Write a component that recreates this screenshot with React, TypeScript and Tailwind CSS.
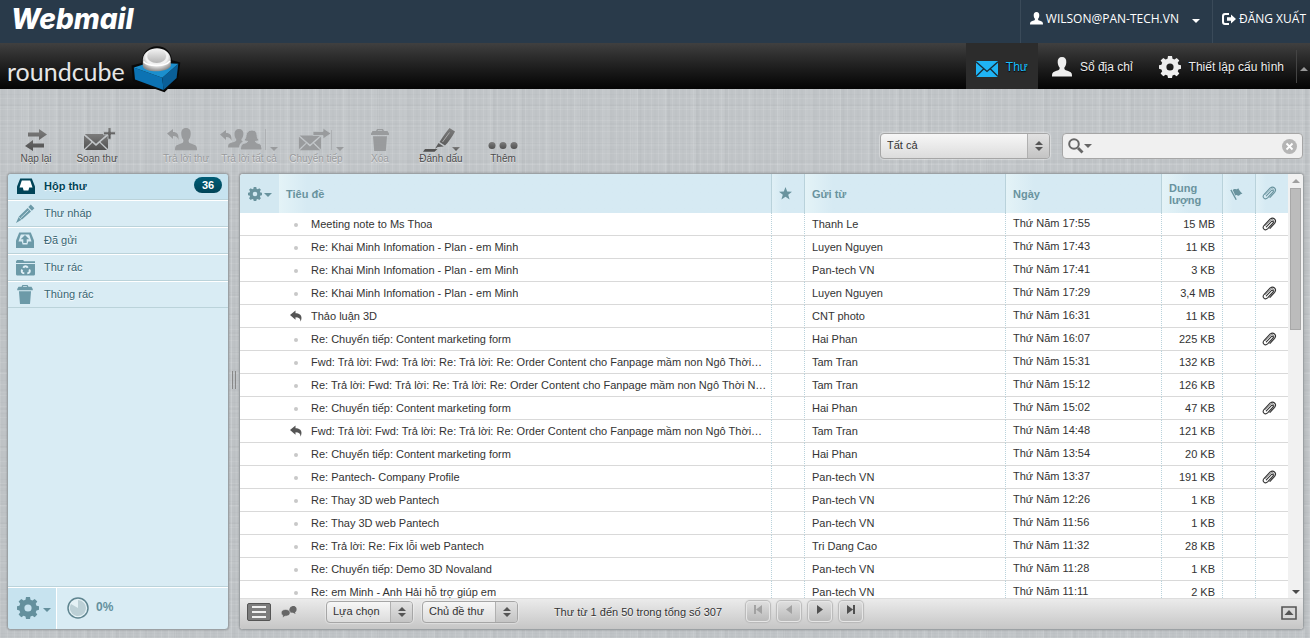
import type { ReactNode } from 'react';

type Message = {
  subject: string;
  from: string;
  date: string;
  size: string;
  replied?: boolean;
  attachment?: boolean;
};

const messages: Message[] = [
  { subject: 'Meeting note to Ms Thoa', from: 'Thanh Le', date: 'Thứ Năm 17:55', size: '15 MB', attachment: true },
  { subject: 'Re: Khai Minh Infomation - Plan - em Minh', from: 'Luyen Nguyen', date: 'Thứ Năm 17:43', size: '11 KB' },
  { subject: 'Re: Khai Minh Infomation - Plan - em Minh', from: 'Pan-tech VN', date: 'Thứ Năm 17:41', size: '3 KB' },
  { subject: 'Re: Khai Minh Infomation - Plan - em Minh', from: 'Luyen Nguyen', date: 'Thứ Năm 17:29', size: '3,4 MB', attachment: true },
  { subject: 'Thảo luận 3D', from: 'CNT photo', date: 'Thứ Năm 16:31', size: '11 KB', replied: true },
  { subject: 'Re: Chuyển tiếp: Content marketing form', from: 'Hai Phan', date: 'Thứ Năm 16:07', size: '225 KB', attachment: true },
  { subject: 'Fwd: Trả lời: Fwd: Trả lời: Re: Trả lời: Re: Order Content cho Fanpage mầm non Ngô Thời…', from: 'Tam Tran', date: 'Thứ Năm 15:31', size: '132 KB' },
  { subject: 'Re: Trả lời: Fwd: Trả lời: Re: Trả lời: Re: Order Content cho Fanpage mầm non Ngô Thời N…', from: 'Tam Tran', date: 'Thứ Năm 15:12', size: '126 KB' },
  { subject: 'Re: Chuyển tiếp: Content marketing form', from: 'Hai Phan', date: 'Thứ Năm 15:02', size: '47 KB', attachment: true },
  { subject: 'Fwd: Trả lời: Fwd: Trả lời: Re: Trả lời: Re: Order Content cho Fanpage mầm non Ngô Thời…', from: 'Tam Tran', date: 'Thứ Năm 14:48', size: '121 KB', replied: true },
  { subject: 'Re: Chuyển tiếp: Content marketing form', from: 'Hai Phan', date: 'Thứ Năm 13:54', size: '20 KB' },
  { subject: 'Re: Pantech- Company Profile', from: 'Pan-tech VN', date: 'Thứ Năm 13:37', size: '191 KB', attachment: true },
  { subject: 'Re: Thay 3D web Pantech', from: 'Pan-tech VN', date: 'Thứ Năm 12:26', size: '1 KB' },
  { subject: 'Re: Thay 3D web Pantech', from: 'Pan-tech VN', date: 'Thứ Năm 11:56', size: '1 KB' },
  { subject: 'Re: Trả lời: Re: Fix lỗi web Pantech', from: 'Tri Dang Cao', date: 'Thứ Năm 11:32', size: '28 KB' },
  { subject: 'Re: Chuyển tiếp: Demo 3D Novaland', from: 'Pan-tech VN', date: 'Thứ Năm 11:28', size: '1 KB' },
  { subject: 'Re: em Minh - Anh Hải hỗ trợ giúp em', from: 'Pan-tech VN', date: 'Thứ Năm 11:11', size: '2 KB' },
];

/* ---------- icons ---------- */

function Gear({ size, className }: { size: number; className?: string }) {
  return (
    <svg width={size} height={size} viewBox="0 0 22 22" className={className} fill="currentColor" aria-hidden="true">
      <path
        fillRule="evenodd"
        d="M9 0h4l.5 2.7 1.9.8 2.3-1.6 2.6 2.6-1.6 2.3.8 1.9 2.5.5v3.6l-2.5.6-.8 1.9 1.6 2.3-2.6 2.7-2.3-1.6-1.9.8L13 22H9l-.5-2.5-1.9-.8-2.3 1.6-2.7-2.7 1.6-2.3-.8-1.900L0 12.8V9.200l2.4-.5.8-1.9-1.6-2.3 2.7-2.6 2.3 1.6 1.9-.8zM11 7.4a3.6 3.6 0 1 0 0 7.2 3.6 3.6 0 0 0 0-7.2z"
      />
    </svg>
  );
}

function Person({ size, className }: { size: number; className?: string }) {
  return (
    <svg width={size} height={size} viewBox="0 0 20 20" className={className} fill="currentColor" aria-hidden="true">
      <path d="M10 0c3 0 4.500 2 4.300 5.200-.1 2.300-.8 4-1.900 5.200-.2 1.300.2 2.300 1.400 2.800 2 .8 5.200 1.300 5.900 3.300.3 1 .3 2 .3 2.900H0c0-.9 0-1.900.3-2.900.7-2 3.900-2.500 5.900-3.300 1.200-.5 1.600-1.500 1.400-2.800C6.500 9.200 5.800 7.500 5.700 5.200 5.500 2 7 0 10 0z" />
    </svg>
  );
}

function Caret({ className }: { className?: string }) {
  return (
    <svg width="8" height="4" viewBox="0 0 8 4" className={className} fill="currentColor" aria-hidden="true">
      <path d="M0 0h8L4 4z" />
    </svg>
  );
}

function Clip({ className }: { className?: string }) {
  return (
    <svg width="15" height="14" viewBox="0 0 15 14" className={className} fill="none" stroke="currentColor" strokeWidth="1.100" strokeLinecap="round" aria-hidden="true">
      <path d="M4.300 9.800 9.300 4.700c1.300-1.200 2.700.2 1.600 1.500L5.600 11.900c-2.700 2.300-5.900-.7-3.600-3.400l6-6.300c3.200-2.900 7.300.9 4.600 4.200L8 11.400" />
      <path d="M3.300 8.500 8.600 3.200c2-1.600 4.300.2 3.200 2.500" strokeWidth=".6" />
    </svg>
  );
}

function ReloadIcon() {
  return (
    <svg width="24" height="26" viewBox="0 0 24 26" fill="url(#tool)" aria-hidden="true">
      <path d="M4 5.500h11V2l8 5.500-8 5.500V9.500H4zM20 16.500H9V13l-8 6 8 5v-3.500h11z" />
    </svg>
  );
}

function EnvelopeShape() {
  return (
    <path d="M1 8.500 8.500 15 1 22zM25 8.500 17.500 15 25 22zM1.800 7H24.200L13 16.800zM2 23l7.400-7.200L13 19l3.600-3.200L24 23z" />
  );
}

function ComposeIcon() {
  return (
    <svg width="34" height="26" viewBox="0 0 34 26" fill="url(#tool)" aria-hidden="true">
      <EnvelopeShape />
      <path d="M25 .5h3v4.300h4.500v3H28v4.400h-3V7.800h-4.500v-3H25z" stroke="#c2c6c9" strokeWidth=".8" />
    </svg>
  );
}

function ReplyIcon() {
  return (
    <svg width="30" height="26" viewBox="0 0 30 26" fill="currentColor" aria-hidden="true">
      <path d="M0 6.500 6 2v3c4 0 6 2 5.500 8-.8-2.800-2.300-4-5.500-4v3z" />
      <g transform="translate(8 1) scale(1.100 1.150)">
        <path d="M10 0c3 0 4.500 2 4.300 5.200-.1 2.300-.8 4-1.900 5.200-.2 1.300.2 2.300 1.400 2.800 2 .8 5.200 1.300 5.900 3.300.3 1 .3 2 .3 2.900H0c0-.9 0-1.900.3-2.900.7-2 3.900-2.500 5.900-3.300 1.200-.5 1.600-1.500 1.400-2.800C6.500 9.200 5.800 7.500 5.700 5.200 5.500 2 7 0 10 0z" />
      </g>
    </svg>
  );
}

function ReplyAllIcon() {
  return (
    <svg width="60" height="26" viewBox="0 0 60 26" fill="currentColor" aria-hidden="true">
      <path d="M1 7.500 7 3v3c4 0 6 2 5.500 8-.8-2.800-2.300-4-5.500-4v3z" />
      <path d="M20 2c3 0 4.600 2 4.400 5-.1 2.300-.9 4-2 5.200 0 1.300.3 2 1.600 2.600-2.500 1-3.500 2.200-4 5.700H9c0-3 .6-4 3-4.800 3-.9 5.500-1 5.300-3.300-1.200-1.400-1.700-3-1.800-5.400C15.400 4 17 2 20 2z" />
      <path d="M33 3c3.600 0 5 2.500 5.100 5.500.1 2.500.9 3.500 1.900 4.500-1 1-2 1.300-3.500 1.300 0 1.200 1.200 1.500 2.500 1.900 3 .9 3.900 2 4 6.800H21.500c0-4.800 1-5.900 4-6.800 1.400-.4 3-.8 3-1.900-1.500 0-2.500-.3-3.500-1.300 1-1 1.900-2 2-4.500C27.100 5.500 29.500 3 33 3z" stroke="#c2c6c9" />
      <path d="M46 2h1v21h-1z" opacity=".5" />
      <path d="M51 20h8l-4 4z" />
    </svg>
  );
}

function ForwardIcon() {
  return (
    <svg width="46" height="26" viewBox="0 0 46 26" fill="currentColor" aria-hidden="true">
      <g transform="translate(0 2) scale(.92)">
        <EnvelopeShape />
      </g>
      <path d="M15 4.500h10V1l8 5.500-8 5.500V8.500H15z" stroke="#c2c6c9" strokeWidth=".8" />
      <path d="M33 3h1v20h-1z" opacity=".5" />
      <path d="M38 20h8l-4 4z" />
    </svg>
  );
}

function TrashIcon({ className }: { className?: string }) {
  return (
    <svg width="18" height="22" viewBox="0 0 18 22" className={className} fill="currentColor" aria-hidden="true">
      <path d="M6 0h6l1 2h3.500L18 4.500V6H0V4.500L1.500 2H5zM7 1.200 6.600 2h4.800L11 1.200zM2 7.300h14L14.800 22H3.200z" />
    </svg>
  );
}

function MarkIcon() {
  return (
    <svg width="38" height="26" viewBox="0 0 38 26" fill="url(#tool)" aria-hidden="true">
      <path d="M27.500 1 33 4.500c-3 5.500-6 10-10 14l-5.500-3.500C20.500 10.500 23.500 5.500 27.500 1zM16.500 16l5.300 3.500-6 .6-2.800 1.700zM3 22h12.500l-3 2.800H1z" />
      <path d="m20.500 15 7-9.500" stroke="#aaa" strokeWidth="1" />
      <path d="M30 20h8l-4 4z" />
    </svg>
  );
}

function MoreIcon() {
  return (
    <svg width="30" height="26" viewBox="0 0 30 26" fill="url(#tool)" aria-hidden="true">
      <circle cx="4" cy="18.500" r="3.500" />
      <circle cx="15" cy="18.500" r="3.500" />
      <circle cx="26" cy="18.500" r="3.500" />
    </svg>
  );
}

function InboxIcon() {
  return (
    <svg width="18" height="17" viewBox="0 0 18 17" fill="currentColor" aria-hidden="true">
      <path d="M3.200.5h11.600L18 8.500V16H0V8.500z" />
      <path d="M4.800 2.500h8.400l2.300 7h-3.300l-.8 3H6.600l-.8-3H2.500z" fill="#fff" />
    </svg>
  );
}

function SentIcon() {
  return (
    <svg width="18" height="17" viewBox="0 0 18 17" fill="currentColor" aria-hidden="true">
      <path d="M3.200.5h11.600L18 8.500V16H0V8.500z" />
      <path d="M4.800 2.500h8.400l2.300 7h-3.300l-.8 3H6.600l-.8-3H2.500z" fill="#d9ecf4" />
      <path d="m9 3 4.300 4.300h-2.600V11H7.300V7.300H4.700z" />
    </svg>
  );
}

function PencilIcon() {
  return (
    <svg width="19" height="19" viewBox="0 0 19 19" fill="currentColor" aria-hidden="true">
      <path d="m14.800.6 3.600 3.600-2.500 2.500-3.600-3.600zM11.600 4 15 7.400 6 15.600 0 19l2.900-6.400z" />
      <path d="M5 13.700 12.500 6.500M2.700 13l3 2.800" stroke="#d9ecf4" strokeWidth=".8" />
    </svg>
  );
}

function JunkIcon() {
  return (
    <svg width="19" height="17" viewBox="0 0 19 17" fill="currentColor" aria-hidden="true">
      <path d="M0 2.500 1 1h6l1.200 1.300H19V4H0zM0 5h19v10.500l-.8 1H.8l-.8-1z" />
      <g stroke="#e3f2f8" strokeWidth="2" fill="none">
        <path d="M7.300 8.700c1-2 3.400-2 4.400 0" />
        <path d="M13.200 10.500c1.400 1.800.3 3.700-1.900 3.700" />
        <path d="M8.300 14.200c-2.400 0-3.300-1.700-2-3.600" />
      </g>
    </svg>
  );
}

function CubeLogo() {
  return (
    <svg width="50" height="48" viewBox="0 0 50 48" aria-hidden="true">
      <defs>
        <radialGradient id="ball" cx=".5" cy=".35" r=".65">
          <stop offset="0" stopColor="#d8d8d8" />
          <stop offset=".6" stopColor="#f4f4f4" />
          <stop offset="1" stopColor="#8c8c8c" />
        </radialGradient>
        <linearGradient id="dimple" x1="0" y1="0" x2="0" y2="1">
          <stop offset="0" stopColor="#f2f2f2" />
          <stop offset="1" stopColor="#b4b4b4" />
        </linearGradient>
      </defs>
      <path d="M.5 19.500 10.500 17C11 7 17 .3 26 .3S40 6 41 14.200l8.300 2.300L47 33 33.500 46.300 2 35z" fill="#0a0a0a" />
      <path d="m2.800 21.500 28.500 10.300L32.500 44 4 33.600z" fill="#0c73b4" />
      <path d="m31.300 31.800 16-14-1.700 14.300L32.500 44z" fill="#0a5f98" />
      <path d="m2.800 21.500 16-5 28.500 1.300-16 14z" fill="#1b8fce" />
      <path d="M11.800 20.500V13c2-14.500 26.500-14.500 28 0v7c-3 6.500-24.500 7.500-28 .5z" fill="url(#ball)" />
      <ellipse cx="25.700" cy="10" rx="9.500" ry="7" fill="url(#dimple)" />
      <path d="M12.500 15.500c4.500 5.500 22 5.500 26.500-.5" stroke="#fff" strokeWidth="1.400" fill="none" />
    </svg>
  );
}

/* ---------- controls ---------- */

function Select({ label, value, className }: { label: string; value: string; className: string }) {
  return (
    <div
      className={`relative overflow-hidden rounded border border-[#a6a6a6] bg-linear-to-b from-[#f7f7f7] to-[#dcdcdc] shadow-[0_0_1px_1px_rgba(255,255,255,0.35)] ${className}`}
    >
      <select
        aria-label={label}
        defaultValue={value}
        className="block h-full w-full appearance-none bg-transparent pr-6 pb-px pl-1.5 text-[11px] text-[#333] outline-none"
      >
        <option>{value}</option>
      </select>
      <span className="pointer-events-none absolute inset-y-0 right-0 flex w-[22px] items-center justify-center border-l border-[#b0b0b0] bg-linear-to-b from-[#e2e2e2] to-[#c4c4c4] text-[#555]">
        <svg width="8" height="10" viewBox="0 0 8 10" fill="currentColor" aria-hidden="true">
          <path d="M0 4h8L4 0zM0 6h8l-4 4z" />
        </svg>
      </span>
    </div>
  );
}

function Tool({ icon, label, className, disabled }: { icon: ReactNode; label: string; className: string; disabled?: boolean }) {
  return (
    <button
      type="button"
      disabled={disabled}
      className={`flex flex-col items-center whitespace-nowrap text-[10px] leading-3 [text-shadow:0_1px_1px_rgba(255,255,255,0.7)] ${disabled ? 'text-[#999b9d]' : 'text-[#4d4d4d]'} ${className}`}
    >
      {icon}
      {label}
    </button>
  );
}

const folders = [
  { name: 'Thư nháp', icon: <PencilIcon /> },
  { name: 'Đã gửi', icon: <SentIcon /> },
  { name: 'Thư rác', icon: <JunkIcon /> },
  { name: 'Thùng rác', icon: <TrashIcon className="h-[19px] w-4" /> },
];

const pagers = [
  { label: 'Trang đầu', d: 'M1 0h2v9H1zM9 0v9L3 4.500z', off: true },
  { label: 'Trang trước', d: 'M8 0v9L2 4.500z', off: true },
  { label: 'Trang sau', d: 'M2 0v9l6-4.500z', off: false },
  { label: 'Trang cuối', d: 'M1 0v9l6-4.500zM7 0h2v9H7z', off: false },
];

const headBase = 'border-l border-[#b9d2db] p-0 text-left align-middle font-bold';
const headCell = `${headBase} bg-linear-to-r from-[#e4f3f7] to-[#d6eaf3] to-[28px] px-[7px]`;
const iconCell = `${headBase} bg-linear-to-r from-[#e0f0f6] to-[#d6eaf3] to-[10px]`;
const cell = 'h-[23px] border-b border-[#d9d9d9] p-0';
const dotted = 'border-l border-l-[#b9d2db] [border-left-style:dotted]';

export default function App() {
  return (
    <div className="flex h-screen flex-col overflow-hidden bg-[#c1c5c8] bg-[repeating-linear-gradient(90deg,rgba(255,255,255,0.09)_0_1px,transparent_1px_3px,rgba(0,0,0,0.012)_3px_5px,transparent_5px_7px),repeating-linear-gradient(0deg,rgba(255,255,255,0.08)_0_1px,transparent_1px_4px,rgba(0,0,0,0.015)_4px_5px,transparent_5px_11px),repeating-linear-gradient(90deg,rgba(0,0,0,0.015)_0_3px,transparent_3px_23px,rgba(255,255,255,0.05)_23px_29px),repeating-linear-gradient(0deg,rgba(0,0,0,0.015)_0_2px,transparent_2px_17px,rgba(255,255,255,0.05)_17px_19px)] font-['Liberation_Sans',Arial,sans-serif] text-[11px] text-[#333]">
      <svg width="0" height="0" className="absolute" aria-hidden="true">
        <defs>
          <linearGradient id="tool" x1="0" y1="0" x2="0" y2="1">
            <stop offset="0" stopColor="#7c7c7c" />
            <stop offset="1" stopColor="#505050" />
          </linearGradient>
        </defs>
      </svg>

      {/* account bar */}
      <div className="flex h-[43px] shrink-0 justify-between bg-[#293a4a] text-white">
        <a href="#" className="pl-[11px] font-[Inter,sans-serif] text-[28px] leading-[38px] font-extrabold italic">
          Webmail
        </a>
        <div className="flex h-full font-['Open_Sans',sans-serif] text-[12px]">
          <button type="button" className="flex items-center border-l border-[#3a4a59] pr-3 pb-1.5 pl-[9px]">
            <Person size={13} className="mr-[3px]" />
            WILSON@PAN-TECH.VN
            <Caret className="mt-1 ml-[13px]" />
          </button>
          <a href="#" className="flex items-center border-l border-[#3a4a59] pr-1 pb-1.5 pl-[9px]">
            <svg width="14" height="12" viewBox="0 0 14 12" className="mr-[3px]" fill="currentColor" aria-hidden="true">
              <path d="M7 0v2H3.500C2.500 2 2 2.500 2 3.500v5c0 1 .5 1.500 1.500 1.500H7v2H3C1 12 0 11 0 9V3c0-2 1-3 3-3zM9 1.500 14 6l-5 4.500V7.700H5V4.300h4z" />
            </svg>
            ĐĂNG XUẤT
          </a>
        </div>
      </div>

      {/* task bar */}
      <header className="relative flex h-[46px] shrink-0 justify-between bg-linear-to-b from-[#404040] to-[#050505] text-[12px] text-[#eee]">
        <a href="#" className="flex h-[46px] items-start pl-[7px]">
          <span className="mr-1.5 pt-3 font-[Lato,sans-serif] text-[25px] leading-8 text-[#e6e6e6]">roundcube</span>
          <span className="pt-[3px]">
            <CubeLogo />
          </span>
        </a>
        <nav className="flex pt-px [text-shadow:0_1px_1px_#000]">
          <a href="#" className="-mt-px flex items-center bg-[#2c2c2c] px-2.5 pt-px text-[#19bfff]">
            <svg width="22" height="16" viewBox="0 0 22 16" className="mt-1 mr-2" aria-hidden="true">
              <path d="M0 0h22v16H0z" fill="#1fb4f5" />
              <path d="m0 .8 11 9.700L22 .8M0 15.500l7.800-7.700M22 15.500l-7.800-7.700" stroke="#1a2c36" strokeWidth="1.300" fill="none" />
            </svg>
            Thư
          </a>
          <a href="#" className="flex items-center pr-3.5 pl-3.5">
            <Person size={20} className="mr-2" />
            Sổ địa chỉ
          </a>
          <a href="#" className="flex items-center pr-2.5 pl-3">
            <Gear size={22} className="mr-2" />
            <span className="pr-0.5">Thiết lập cấu hình</span>
          </a>
          <button type="button" aria-label="Thu gọn" className="my-1.5 border-l border-[#444] pr-0.5 pl-[3px]">
            <Caret className="mt-1 rotate-180 text-[#999]" />
          </button>
        </nav>
      </header>

      {/* tool bar */}
      <div className="flex h-[84px] shrink-0 items-start justify-between">
        <div className="flex pt-[38px] pl-1.5">
          <Tool className="w-[60px]" icon={<ReloadIcon />} label="Nạp lại" />
          <Tool className="mr-[27px] w-[62px]" icon={<span className="pl-1.5"><ComposeIcon /></span>} label="Soạn thư" />
          <Tool className="w-[62px]" icon={<span className="pr-2"><ReplyIcon /></span>} label="Trả lời thư" disabled />
          <Tool className="w-16" icon={<ReplyAllIcon />} label="Trả lời tất cả" disabled />
          <Tool className="w-[70px]" icon={<span className="pl-2.5"><ForwardIcon /></span>} label="Chuyển tiếp" disabled />
          <Tool className="w-[58px]" icon={<TrashIcon className="mt-0.5 mb-0.5" />} label="Xóa" disabled />
          <Tool className="w-16" icon={<MarkIcon />} label="Đánh dấu" />
          <Tool className="w-[60px]" icon={<MoreIcon />} label="Thêm" />
        </div>
        <div className="flex gap-3 pt-11 pr-[7px]">
          <Select label="Bộ lọc" value="Tất cả" className="h-[26px] w-[170px]" />
          <label className="flex h-[26px] w-[241px] items-center rounded border border-[#a6a6a6] bg-[#f0f0f0] px-[5px] text-[#666]">
            <svg width="16" height="16" viewBox="0 0 16 16" fill="none" stroke="currentColor" strokeWidth="2" aria-hidden="true">
              <circle cx="6" cy="6" r="4.800" />
              <path d="m10 10 4.500 4.500" strokeWidth="2.800" />
            </svg>
            <Caret />
            <input type="text" aria-label="Tìm kiếm" className="min-w-0 flex-1 bg-transparent px-1 text-[11px] outline-none" />
            <button type="button" aria-label="Xóa tìm kiếm">
              <svg width="15" height="15" viewBox="0 0 15 15" aria-hidden="true">
                <circle cx="7.500" cy="7.500" r="7.500" fill="#b5b5b5" />
                <path d="m4.500 4.500 6 6m0-6-6 6" stroke="#fff" strokeWidth="1.800" />
              </svg>
            </button>
          </label>
        </div>
      </div>

      {/* main area */}
      <main className="flex min-h-0 flex-1 pr-1.5 pb-2 pl-[7px]">
        <aside className="flex w-[222px] shrink-0 flex-col overflow-hidden rounded border border-[#9ca1a4] bg-[#d9ecf4] shadow-[0_0_2px_rgba(0,0,0,0.3)]">
          <ul className="flex-1 text-[#376572] [text-shadow:0_1px_1px_#fff]">
            <li className="border-b border-[#bbd3da]">
              <a href="#" className="flex h-[25px] items-center bg-[#c7e3ef] pr-1.5 pl-[9px] font-bold text-[#004458]">
                <InboxIcon />
                <span className="ml-[9px] flex-1 pb-px">Hộp thư</span>
                <span className="mb-[3px] h-4 w-7 rounded-full bg-linear-to-b from-[#005d76] to-[#004558] text-center leading-4 text-white [text-shadow:none]">
                  36
                </span>
              </a>
            </li>
            {folders.map((f) => (
              <li key={f.name} className="border-t border-b border-t-white border-b-[#bbd3da]">
                <a href="#" className="flex h-[25px] items-center pl-[7px]">
                  <span className="flex w-5 justify-center text-[#6c9aa8]">{f.icon}</span>
                  <span className="ml-[9px] pb-px">{f.name}</span>
                </a>
              </li>
            ))}
          </ul>
          <div className="flex h-[43px] border-t border-[#bbd3da]">
            <button type="button" aria-label="Thao tác thư mục" className="flex w-[49px] items-center border-t border-r border-white bg-[#c7e3ef] pb-0.5 pl-[9px] text-[#64909d]">
              <Gear size={22} />
              <Caret className="mt-1 ml-1" />
            </button>
            <div className="flex flex-1 items-center border-t border-white pb-0.5 pl-2.5 font-bold text-[#64909d]">
              <svg width="22" height="22" viewBox="0 0 22 22" aria-hidden="true">
                <circle cx="11" cy="11" r="10" fill="#e4f1f5" stroke="#5f8590" strokeWidth="1.500" />
                <path d="M11 11V3a8 8 0 1 1-7 4z" fill="#bcd0d6" />
              </svg>
              <span className="ml-[7px] pb-0.5 text-[12px]">0%</span>
            </div>
          </div>
        </aside>

        <div className="flex w-2.5 shrink-0 items-center justify-center gap-0.5 pb-11">
          <span className="h-[18px] w-px bg-[#888]" />
          <span className="h-[18px] w-px bg-[#888]" />
        </div>

        <section className="flex min-w-0 flex-1 flex-col overflow-hidden rounded border border-[#9ca1a4] bg-white shadow-[0_0_2px_rgba(0,0,0,0.3)]">
          <div className="flex min-h-0 flex-1">
            <div className="min-w-0 flex-1 overflow-hidden">
              <table className="w-full table-fixed border-separate border-spacing-0">
                <colgroup>
                  <col className="w-[39px]" />
                  <col />
                  <col className="w-[33px]" />
                  <col className="w-[201px]" />
                  <col className="w-[156px]" />
                  <col className="w-[61px]" />
                  <col className="w-[33px]" />
                  <col className="w-[33px]" />
                </colgroup>
                <thead className="leading-3 text-[#69939e]">
                  <tr className="h-[39px]">
                    <th className="bg-[#d3e8f1] p-0">
                      <button type="button" aria-label="Tùy chọn danh sách" className="flex items-center pl-2">
                        <Gear size={14} />
                        <Caret className="mt-0.5 ml-0.5" />
                      </button>
                    </th>
                    <th className="bg-linear-to-r from-[#e4f3f7] to-[#d6eaf3] to-[28px] p-0 px-[7px] text-left align-middle font-bold">
                      Tiêu đề
                    </th>
                    <th className={`${iconCell} pl-[7px]`}>
                      <svg width="13" height="13" viewBox="0 0 13 13" fill="currentColor" aria-label="Trạng thái">
                        <path d="m6.500 0 1.700 4.600 4.800.2-3.800 3 1.400 4.800-4.100-2.800-4.100 2.800 1.400-4.800-3.800-3 4.800-.2z" />
                      </svg>
                    </th>
                    <th className={headCell}>Gửi từ</th>
                    <th className={headCell}>Ngày</th>
                    <th className={headCell}>Dung lượng</th>
                    <th className={`${iconCell} pl-[7px]`}>
                      <svg width="13" height="12" viewBox="0 0 13 12" fill="currentColor" aria-label="Cờ">
                        <path d="M.3 2.200 1.500 1.500l5.300 10-1.200.5zM2.800 2.300C4.500-.3 6 2.500 8.300.3c.9 2.300 2.500 3.800 4.200 5.500C10 5.600 9.300 8.800 7.500 7.400 6.300 6.500 6 7 5.300 7.600z" />
                      </svg>
                    </th>
                    <th className={`${iconCell} pl-1.5 pb-0.5`}>
                      <Clip />
                    </th>
                  </tr>
                </thead>
                <tbody>
                  {messages.map((m, i) => (
                    <tr key={i}>
                      <td className={cell} />
                      <td className={cell}>
                        <div className="flex items-center pr-[3px] pl-2.5">
                          <span className="flex w-[13px] shrink-0 justify-center">
                            {m.replied ? (
                              <svg width="12" height="12" viewBox="0 0 12 12" fill="#555" aria-label="Đã trả lời">
                                <path d="M0 5 5.500.5v2.800c5 0 7.500 3 5 8.500.2-3.200-1.500-4.600-5-4.600v2.600z" />
                              </svg>
                            ) : (
                              <span className="mt-px size-1 rounded-full bg-[#c8c8c8]" />
                            )}
                          </span>
                          <a href="#" className="ml-[9px] truncate leading-4">
                            {m.subject}
                          </a>
                        </div>
                      </td>
                      <td className={`${cell} ${dotted}`} />
                      <td className={`${cell} ${dotted} px-[7px]`}>{m.from}</td>
                      <td className={`${cell} ${dotted} px-[7px] pb-0.5`}>{m.date}</td>
                      <td className={`${cell} ${dotted} px-[7px] text-right`}>{m.size}</td>
                      <td className={`${cell} ${dotted}`} />
                      <td className={`${cell} ${dotted} pl-1.5`}>{m.attachment && <Clip className="text-[#333]" />}</td>
                    </tr>
                  ))}
                </tbody>
              </table>
            </div>
            <div className="flex w-[15px] shrink-0 flex-col items-center bg-[#f1f1f1]">
              <Caret className="my-[5px] shrink-0 rotate-180 text-[#a0a0a0]" />
              <div className="h-[142px] w-[11px] border border-[#a8a8a8] bg-[#bcbcbc]" />
              <Caret className="mt-auto mb-1 shrink-0 text-[#4a4a4a]" />
            </div>
          </div>

          <footer className="flex h-[31px] shrink-0 items-start border-t border-[#ddd] bg-linear-to-b from-[#ebebeb] to-[#c6c6c6] pt-0.5 pr-1.5 pl-[7px]">
            <button type="button" aria-label="Danh sách" className="mt-0.5 flex h-[18px] w-6 items-center justify-center rounded-xs border border-[#555] bg-[#7d7d7d]">
              <svg width="14" height="12" viewBox="0 0 14 12" fill="#f0f0f0" aria-hidden="true">
                <path d="M0 0h14v2H0zM0 5h14v2H0zM0 10h14v2H0z" />
              </svg>
            </button>
            <button type="button" aria-label="Chủ đề" className="mt-[5px] ml-2.5">
              <svg width="16" height="12" viewBox="0 0 16 12" fill="#666" aria-hidden="true">
                <path d="M8.500 6.500C7.500 2 10 0 12.500 0 15 0 16 2.500 15.500 4.200c-.2 1-.8 1.600-1.500 2L14.500 8 12 6.800z" />
                <path d="M4.500 3.500c3 0 5 1.500 4.500 4-.4 2-2.500 2.800-5 2.700L1.500 12l.3-2.500C-1 7.500 0 3.500 4.500 3.500z" stroke="#e0e0e0" strokeWidth=".6" />
              </svg>
            </button>
            <Select label="Lựa chọn" value="Lựa chọn" className="ml-[29px] h-[22px] w-[87px]" />
            <Select label="Chủ đề thư" value="Chủ đề thư" className="ml-[9px] h-[22px] w-24" />
            <span className="w-60 pt-[5px] text-center leading-3 [text-shadow:0_1px_1px_#fff]">
              Thư từ 1 đến 50 trong tổng số 307
            </span>
            <div className="-ml-3 flex gap-[7px]">
              {pagers.map((p) => (
                <button
                  key={p.label}
                  type="button"
                  aria-label={p.label}
                  disabled={p.off}
                  className={`flex h-[21px] w-6 items-center justify-center rounded border border-[#e6e6e6] bg-linear-to-b from-[#dedede] to-[#bababa] pb-1 shadow-[0_0_1px_1px_#b8b8b8] ${p.off ? 'text-[#a2a2a2]' : 'text-[#505050]'}`}
                >
                  <svg width="10" height="9" viewBox="0 0 10 9" fill="currentColor" aria-hidden="true">
                    <path d={p.d} />
                  </svg>
                </button>
              ))}
            </div>
            <button type="button" aria-label="Xem trước" className="mt-[5px] ml-auto">
              <svg width="16" height="14" viewBox="0 0 16 14" aria-hidden="true">
                <path d="M1 1h14v12H1z" fill="#d8d8d8" stroke="#555" strokeWidth="1.600" />
                <path d="M3.500 9h9L8 4z" fill="#555" />
              </svg>
            </button>
          </footer>
        </section>
      </main>
    </div>
  );
}
